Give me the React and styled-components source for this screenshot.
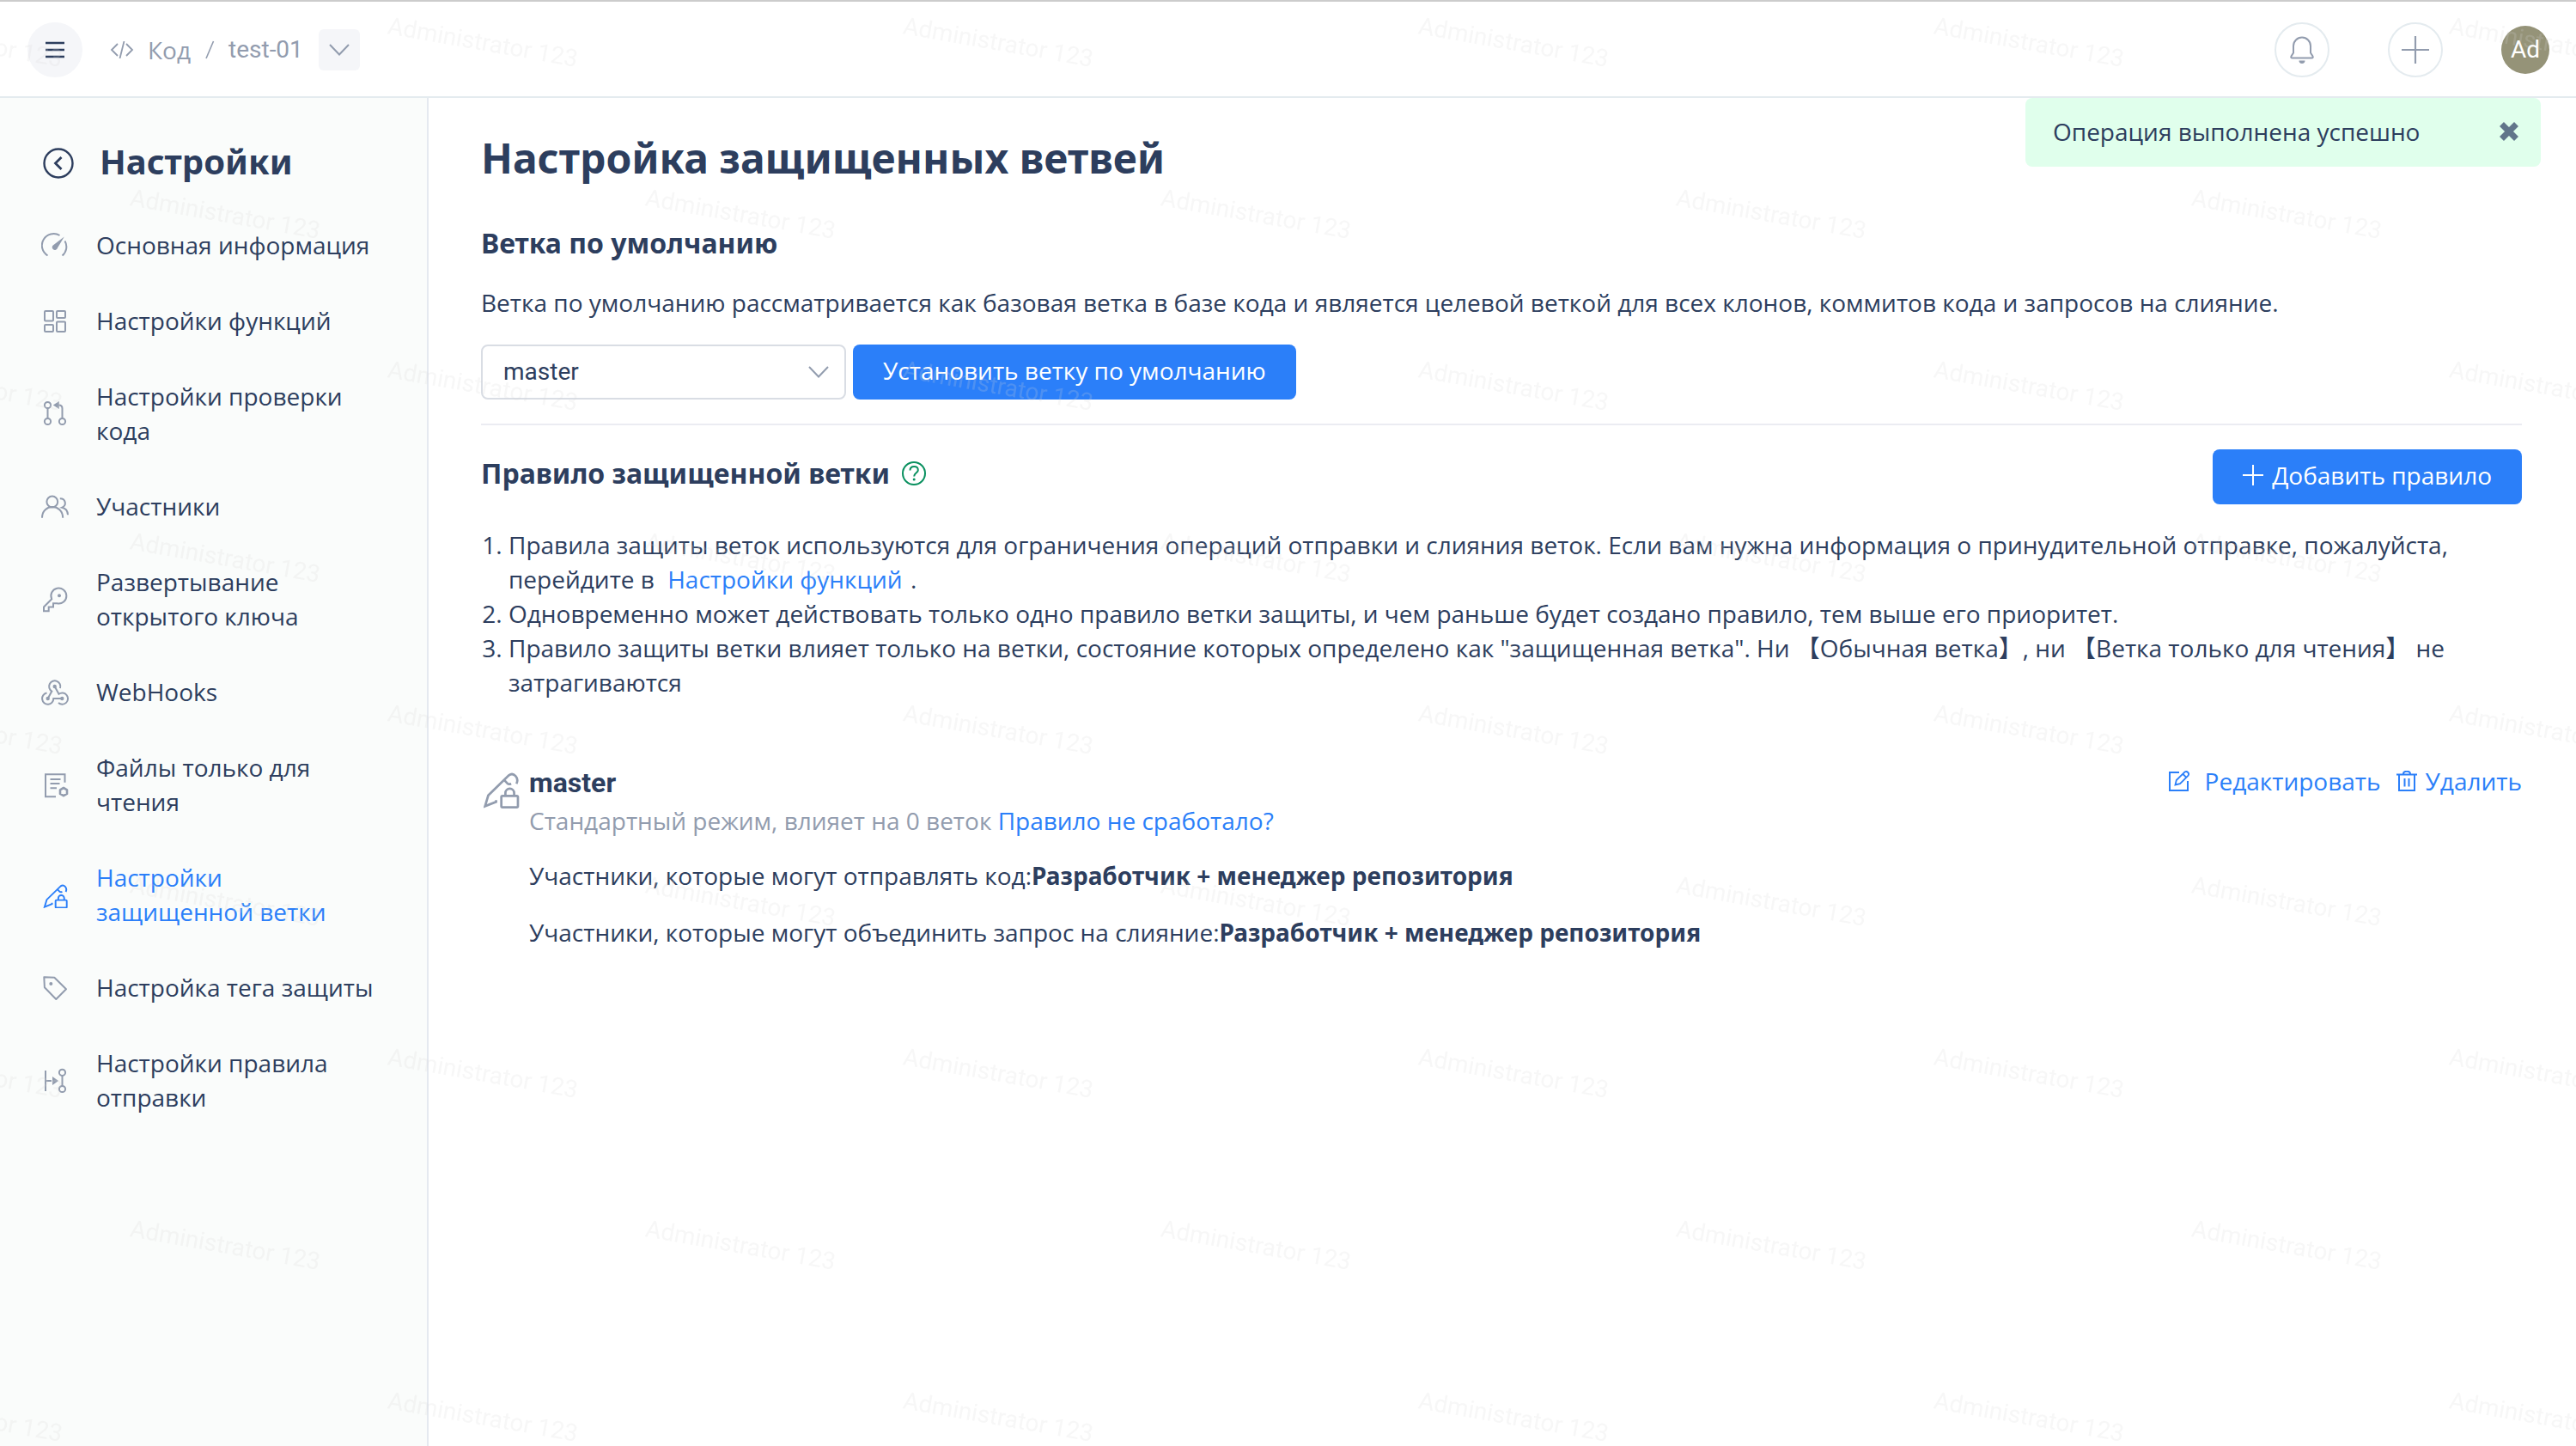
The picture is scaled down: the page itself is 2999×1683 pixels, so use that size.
import React from 'react';
import styled, { createGlobalStyle, css } from 'styled-components';

const color = {
  text: '#2d3e5e',
  muted: '#929cae',
  blue: '#2b7ff9',
  line: '#e4ebef',
  soft: '#f5f6f9',
};

const sans = '"Open Sans", "Noto Sans CJK SC", sans-serif';
const heading = '"Noto Sans", "Noto Sans CJK SC", sans-serif';
const latin = 'Roboto, sans-serif';

const GlobalStyle = createGlobalStyle`
  *, *::before, *::after { box-sizing: border-box; }
  body {
    margin: 0;
    background: #fff;
    color: ${color.text};
    font: 400 28px/40px ${sans};
  }
  h1, h2, h3, p, ol, ul, dl, dd { margin: 0; padding: 0; }
  button, select { font: inherit; color: inherit; }
  a { color: inherit; text-decoration: none; }
  svg { display: block; flex: none; }
`;

const Page = styled.div`
  min-height: 100vh;
  display: flex;
  flex-direction: column;
`;

const Header = styled.header`
  display: flex;
  align-items: center;
  justify-content: space-between;
  height: 114px;
  padding: 2px 31px 0 32px;
  border-top: 2px solid #ccc;
  border-bottom: 2px solid ${color.line};
`;

const HeaderSide = styled.div`
  display: flex;
  align-items: center;
  gap: ${(p) => p.$gap}px;
`;

const RoundButton = styled.button`
  display: grid;
  place-items: center;
  width: 64px;
  height: 64px;
  padding: 0;
  border: 2px solid ${(p) => (p.$filled ? color.soft : color.line)};
  border-radius: 50%;
  background: ${(p) => (p.$filled ? color.soft : 'transparent')};
  color: ${(p) => (p.$filled ? color.text : color.muted)};
`;

const Avatar = styled.button`
  width: 56px;
  height: 56px;
  padding: 0;
  border: 0;
  border-radius: 50%;
  background: #959378;
  color: #fff;
  font-family: ${latin};
`;

const Breadcrumb = styled.nav`
  display: flex;
  align-items: center;
  gap: 16px;
  color: ${color.muted};
`;

const CrumbName = styled.a`
  font-family: ${latin};
`;

const DropButton = styled.button`
  display: grid;
  place-items: center;
  width: 48px;
  height: 48px;
  margin-left: 2px;
  padding: 0;
  border: 0;
  border-radius: 6px;
  background: ${color.soft};
  color: ${color.muted};
`;

const Body = styled.div`
  flex: 1;
  display: grid;
  grid-template-columns: 499px minmax(0, 1fr);
`;

const Sidebar = styled.aside`
  padding: 46px 55px 48px 48px;
  border-right: 2px solid #e5e9f0;
  background: #fafcfb;
`;

const SidebarTitle = styled.div`
  display: flex;
  align-items: center;
  gap: 28px;
  margin-bottom: 21px;
`;

const SidebarHeading = styled.h2`
  padding-bottom: 4px;
  font: 700 40px/56px ${heading};
`;

const IconButton = styled.button`
  display: grid;
  padding: 0;
  border: 0;
  background: none;
  color: ${(p) => p.$color || 'inherit'};
`;

const Menu = styled.ul`
  list-style: none;
`;

const MenuLink = styled.a`
  display: flex;
  align-items: center;
  gap: 32px;
  padding: 24px 0;
  color: ${(p) => (p.$active ? color.blue : color.text)};

  svg { color: ${(p) => (p.$active ? color.blue : color.muted)}; }
`;

const Main = styled.main`
  padding: 40px 63px 64px 61px;
`;

const Title = styled.h1`
  font: 700 48px/60px ${heading};
`;

const SectionTitle = styled.h2`
  display: flex;
  align-items: center;
  gap: 14px;
  font: 700 32px/40px ${heading};
`;

const DefaultBranch = styled.section`
  display: flex;
  flex-direction: column;
  gap: 29px;
  margin-top: 49px;
  padding-bottom: 28px;
  border-bottom: 2px solid #ebecf2;
`;

const Controls = styled.form`
  display: flex;
  gap: 8px;
`;

const SelectWrap = styled.label`
  display: grid;
  grid-template-columns: 1fr 24px 20px;
  align-items: center;
  width: 425px;
  color: ${color.muted};

  svg { grid-area: 1 / 2; pointer-events: none; }
`;

const Select = styled.select`
  grid-area: 1 / 1 / 2 / 4;
  appearance: none;
  height: 64px;
  padding: 0 24px;
  border: 2px solid #d9dde4;
  border-radius: 8px;
  background: #fff;
  color: ${color.text};
  font-family: ${latin};
`;

const PrimaryButton = styled.button`
  display: flex;
  align-items: center;
  justify-content: center;
  gap: 10px;
  height: 64px;
  padding: 0 35px 4px;
  border: 0;
  border-radius: 8px;
  background: ${color.blue};
  color: #fff;
  white-space: nowrap;
`;

const RuleHeader = styled.div`
  display: flex;
  justify-content: space-between;
  align-items: flex-start;
  padding-top: 28px;

  ${SectionTitle} { padding-top: 8px; }
`;

const Notes = styled.ol`
  margin-top: 27px;
  padding-left: 32px;
`;

const TextLink = styled.a`
  color: ${color.blue};
  ${(p) => p.$spaced && css`margin: 0 2px 0 8px;`}
`;

const Rule = styled.article`
  display: grid;
  grid-template-columns: 48px minmax(0, 1fr) auto;
  column-gap: 8px;
  margin-top: 75px;
`;

const RuleIcon = styled.div`
  display: grid;
  justify-content: center;
  align-content: start;
  padding-top: 10px;
  color: ${color.muted};
`;

const RuleName = styled.h3`
  font: 700 32px/44px ${latin};
`;

const RuleMode = styled.p`
  color: ${color.muted};
  line-height: 44px;
`;

const Permissions = styled.dl`
  display: grid;
  gap: 26px;
  margin-top: 22px;
`;

const Permission = styled.div`
  display: flex;
`;

const PermissionValue = styled.dd`
  font-family: ${heading};
  font-weight: 700;
`;

const Actions = styled.div`
  display: flex;
  align-items: flex-start;
  gap: 18px;
`;

const ActionLink = styled.a`
  display: flex;
  align-items: center;
  gap: ${(p) => p.$gap}px;
  color: ${color.blue};
`;

const Toast = styled.div`
  position: absolute;
  z-index: 3;
  top: 114px;
  right: 41px;
  display: flex;
  align-items: center;
  justify-content: space-between;
  width: 600px;
  height: 80px;
  padding: 0 25px 2px 32px;
  border-radius: 8px;
  background: #e0ffec;
`;

const Watermark = styled.div`
  position: fixed;
  z-index: 2;
  inset: 0;
  overflow: hidden;
  pointer-events: none;
  user-select: none;
`;

const WatermarkRow = styled.div`
  display: flex;
  height: 200px;
  padding-top: 10px;
  margin-left: ${(p) => (p.$shifted ? 150 : -150)}px;
`;

const WatermarkText = styled.span`
  flex: 0 0 600px;
  height: 40px;
  color: rgba(214, 214, 214, 0.2);
  font-family: ${latin};
  transform: rotate(10deg);
  transform-origin: 0 30px;
`;

function Icon({ w = 32, h = w, box, sw = 2, children }) {
  return (
    <svg
      width={w}
      height={h}
      viewBox={box || `0 0 ${w} ${h}`}
      fill="none"
      stroke="currentColor"
      strokeWidth={sw}
      aria-hidden="true"
    >
      {children}
    </svg>
  );
}

const GaugeIcon = () => (
  <Icon>
    <path d="M7.5 28.5A13.3 13.3 0 0 1 21.5 5M27.5 11.5a13.3 13.3 0 0 1-3 17" />
    <path d="M26.8 6.5L19 19.5a3.2 3.2 0 1 1-4.6-3.6z" fill="currentColor" stroke="none" />
  </Icon>
);
const GridIcon = () => (
  <Icon>
    <rect x="4" y="5" width="10" height="11.5" rx="1" />
    <rect x="18" y="5" width="10" height="8" rx="1" />
    <rect x="4" y="21" width="10" height="8" rx="1" />
    <rect x="18" y="17.5" width="10" height="11.5" rx="1" />
  </Icon>
);
const MergeIcon = () => (
  <Icon>
    <circle cx="7.5" cy="6.5" r="3.6" />
    <circle cx="7.5" cy="25.5" r="3.6" />
    <circle cx="24.5" cy="25.5" r="3.6" />
    <path d="M7.5 10v12M24.5 22V10.5q0-4-4-4h-2" />
    <path d="M13.8 6.5l7-4.6v9.2z" fill="currentColor" stroke="none" />
  </Icon>
);
const MembersIcon = () => (
  <Icon>
    <circle cx="12.8" cy="11" r="6.4" />
    <path d="M1 29.8C1 12.8 25 12.8 25.2 29.8M21.8 7.2c7 0 8 8 2.5 10.5 4 .8 6.5 4 6.7 8.6" />
  </Icon>
);
const KeyIcon = () => (
  <Icon>
    <path d="M12.2 16.3A9 9 0 1 1 18.5 21.3H14V25.5H8.7V30.3H3V25.5z" />
    <circle cx="21" cy="12.3" r="2" fill="currentColor" stroke="none" />
  </Icon>
);
const HookIcon = () => (
  <Icon>
    <path d="M7.7 24l4.6-8.4A6.6 6.6 0 1 1 22 12" />
    <path d="M15.7 10l4.8 8.8A6.6 6.6 0 1 1 20 29" />
    <path d="M24.3 24h-10A6.6 6.6 0 1 1 6.5 17.6" />
    <g fill="currentColor" stroke="none">
      <circle cx="15.7" cy="10" r="2.2" />
      <circle cx="7.7" cy="24" r="2.2" />
      <circle cx="24.3" cy="24" r="2.2" />
    </g>
  </Icon>
);
const FileIcon = () => (
  <Icon>
    <path d="M27.5 13.7V4.3H5v26h12M10.5 10h12M10.5 15h11M10.5 20.2h7.5" />
    <path d="M26 20l4 2.3v4.6L26 29.2l-4-2.3v-4.6z" strokeWidth="2.6" strokeLinejoin="round" />
  </Icon>
);
const PencilLockIcon = ({ size = 32 }) => (
  <Icon w={size} box={size === 32 ? '-12 -18 140 140' : '0 0 124 124'} sw={size === 32 ? 8.5 : 8}>
    <path d="M43 95v6L5 116l11-37L87 10c16-12 36 8 26 29M69 24l13 14q4 4 13 1" />
    <rect x="61" y="81" width="57" height="39" rx="4" />
    <path d="M75 80v-9a15 15 0 0 1 30 0v9" />
  </Icon>
);
const TagIcon = () => (
  <Icon>
    <path d="M3.3 4.3l12 .5L29 18.3 17.3 30 3.9 16.3z" strokeLinejoin="round" />
    <circle cx="11.3" cy="12" r="2" fill="currentColor" stroke="none" />
  </Icon>
);
const PushIcon = () => (
  <Icon>
    <path d="M5 5v24M5 17h7M24.5 11v12" />
    <path d="M13 12l7 5-7 5z" fill="currentColor" stroke="none" />
    <circle cx="24.5" cy="7.3" r="3.6" />
    <circle cx="24.5" cy="26.5" r="3.6" />
  </Icon>
);
const ChevronIcon = () => (
  <Icon w={24} h={14}>
    <path d="M1 1l11 11.5L23 1" />
  </Icon>
);
const PlusIcon = ({ size }) => (
  <Icon w={size} box="0 0 24 24" sw={size > 24 ? 1.6 : 2}>
    <path d="M12 0v24M0 12h24" />
  </Icon>
);

const menu = [
  { label: 'Основная информация', Glyph: GaugeIcon },
  { label: 'Настройки функций', Glyph: GridIcon },
  { label: 'Настройки проверки кода', Glyph: MergeIcon },
  { label: 'Участники', Glyph: MembersIcon },
  { label: 'Развертывание открытого ключа', Glyph: KeyIcon },
  { label: 'WebHooks', Glyph: HookIcon },
  { label: 'Файлы только для чтения', Glyph: FileIcon },
  { label: 'Настройки защищенной ветки', Glyph: PencilLockIcon, active: true },
  { label: 'Настройка тега защиты', Glyph: TagIcon },
  { label: 'Настройки правила отправки', Glyph: PushIcon },
];

const permissions = [
  ['Участники, которые могут отправлять код:', 'Разработчик + менеджер репозитория'],
  ['Участники, которые могут объединить запрос на слияние:', 'Разработчик + менеджер репозитория'],
];

function TopBar() {
  return (
    <Header>
      <HeaderSide $gap={32}>
        <RoundButton type="button" $filled aria-label="Меню">
          <Icon w={24} sw={2.5}>
            <path d="M1 4h22M1 12h22M1 20h22" />
          </Icon>
        </RoundButton>
        <Breadcrumb aria-label="Навигация">
          <Icon w={28} h={20}>
            <path d="M9 3L2 10l7 7M16.5 0l-5 20M19 3l7 7-7 7" strokeWidth="1.8" />
          </Icon>
          <a href="#code">Код</a>
          <Icon w={12} h={24}>
            <path d="M10.5 2L2 22" strokeWidth="1.6" />
          </Icon>
          <CrumbName href="#repo">test-01</CrumbName>
          <DropButton type="button" aria-label="Выбрать репозиторий">
            <ChevronIcon />
          </DropButton>
        </Breadcrumb>
      </HeaderSide>
      <HeaderSide $gap={68}>
        <RoundButton type="button" aria-label="Уведомления">
          <Icon w={28} h={32}>
            <path d="M4 11.5a10 10 0 0 1 20 0v8l2.5 4q.8 2-1.2 2H2.7q-2 0-1.2-2l2.5-4z" />
            <path d="M10.5 28.5h7a3.5 3.5 0 0 1-7 0z" fill="currentColor" stroke="none" />
          </Icon>
        </RoundButton>
        <RoundButton type="button" aria-label="Создать">
          <PlusIcon size={32} />
        </RoundButton>
        <Avatar type="button">Ad</Avatar>
      </HeaderSide>
    </Header>
  );
}

function SettingsMenu() {
  return (
    <Sidebar>
      <SidebarTitle>
        <IconButton type="button" aria-label="Назад">
          <Icon w={40} sw={2.4}>
            <circle cx="20" cy="20" r="16.5" />
            <path d="M23.5 13l-7 7 7 7" strokeWidth="2.8" />
          </Icon>
        </IconButton>
        <SidebarHeading>Настройки</SidebarHeading>
      </SidebarTitle>
      <Menu>
        {menu.map(({ label, Glyph, active }) => (
          <li key={label}>
            <MenuLink href="#settings" $active={active}>
              <Glyph />
              <span>{label}</span>
            </MenuLink>
          </li>
        ))}
      </Menu>
    </Sidebar>
  );
}

function ProtectedRule() {
  return (
    <Rule>
      <RuleIcon>
        <PencilLockIcon size={42} />
      </RuleIcon>
      <div>
        <RuleName>master</RuleName>
        <RuleMode>
          Стандартный режим, влияет на 0 веток <TextLink href="#why">Правило не сработало?</TextLink>
        </RuleMode>
        <Permissions>
          {permissions.map(([who, value]) => (
            <Permission key={who}>
              <dt>{who}</dt>
              <PermissionValue>{value}</PermissionValue>
            </Permission>
          ))}
        </Permissions>
      </div>
      <Actions>
        <ActionLink href="#edit" $gap={18}>
          <Icon w={24}>
            <path d="M12 2H1v21h21V12" />
            <path d="M7.5 16.5l1.3-5.5L18.5 1.5q2-1.2 3.7.5t.3 3.6L13 15.2zM16.5 4l3.6 3.6" strokeWidth="1.8" />
          </Icon>
          Редактировать
        </ActionLink>
        <ActionLink href="#delete" $gap={10}>
          <Icon w={24}>
            <path d="M0 4.5h24M3 4.5V23h18V4.5M8 4q0-3.2 4-3.2T16 4M9.5 9v9.5M14.5 9v9.5" />
          </Icon>
          Удалить
        </ActionLink>
      </Actions>
    </Rule>
  );
}

export default function App() {
  return (
    <Page lang="ru">
      <GlobalStyle />
      <TopBar />
      <Body>
        <SettingsMenu />
        <Main>
          <Title>Настройка защищенных ветвей</Title>
          <DefaultBranch>
            <SectionTitle>Ветка по умолчанию</SectionTitle>
            <p>
              Ветка по умолчанию рассматривается как базовая ветка в базе кода и является целевой
              веткой для всех клонов, коммитов кода и запросов на слияние.
            </p>
            <Controls>
              <SelectWrap>
                <Select aria-label="Ветка по умолчанию" defaultValue="master">
                  <option>master</option>
                </Select>
                <ChevronIcon />
              </SelectWrap>
              <PrimaryButton type="button">Установить ветку по умолчанию</PrimaryButton>
            </Controls>
          </DefaultBranch>
          <section>
            <RuleHeader>
              <SectionTitle>
                Правило защищенной ветки
                <IconButton type="button" aria-label="Справка" $color="#09905f">
                  <Icon w={28}>
                    <circle cx="14" cy="14" r="13" />
                    <path d="M9.5 10.5q0-4.5 4.7-4.5t4.6 4.2c0 3-4.6 3.3-4.6 7.3" />
                    <circle cx="14.2" cy="21" r="1.5" fill="currentColor" stroke="none" />
                  </Icon>
                </IconButton>
              </SectionTitle>
              <PrimaryButton type="button">
                <PlusIcon size={24} />
                Добавить правило
              </PrimaryButton>
            </RuleHeader>
            <Notes>
              <li>
                Правила защиты веток используются для ограничения операций отправки и слияния веток.
                Если вам нужна информация о принудительной отправке, пожалуйста, перейдите в{' '}
                <TextLink href="#features" $spaced>Настройки функций</TextLink> .
              </li>
              <li>
                Одновременно может действовать только одно правило ветки защиты, и чем раньше будет
                создано правило, тем выше его приоритет.
              </li>
              <li>
                Правило защиты ветки влияет только на ветки, состояние которых определено как
                "защищенная ветка". Ни 【Обычная ветка】, ни 【Ветка только для чтения】 не
                затрагиваются
              </li>
            </Notes>
            <ProtectedRule />
          </section>
        </Main>
      </Body>
      <Toast role="status">
        Операция выполнена успешно
        <IconButton type="button" aria-label="Закрыть" $color="#61758a">
          <Icon w={24} sw={7}>
            <path d="M3.5 3.5l17 17M20.5 3.5l-17 17" />
          </Icon>
        </IconButton>
      </Toast>
      <Watermark aria-hidden="true">
        {Array.from({ length: 9 }, (_, row) => (
          <WatermarkRow key={row} $shifted={row % 2 === 1}>
            {Array.from({ length: 6 }, (_, cell) => (
              <WatermarkText key={cell}>Administrator 123</WatermarkText>
            ))}
          </WatermarkRow>
        ))}
      </Watermark>
    </Page>
  );
}
